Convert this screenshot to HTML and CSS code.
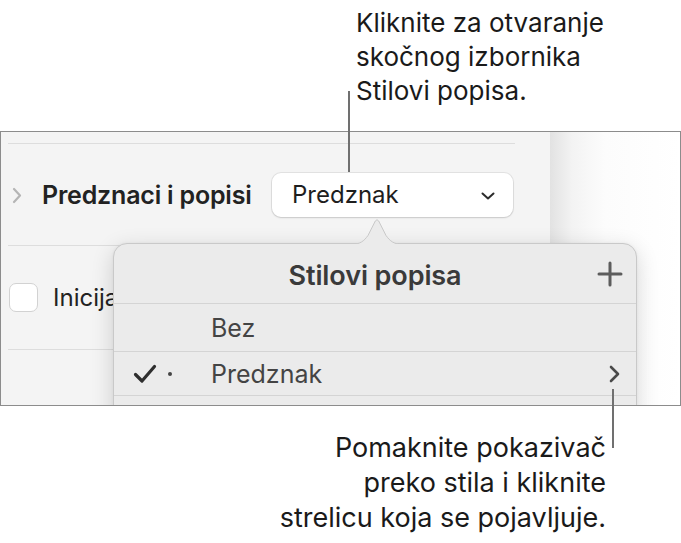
FILE: index.html
```html
<!DOCTYPE html>
<html lang="hr">
<head>
<meta charset="utf-8">
<title>Stilovi popisa</title>
<link rel="stylesheet" href="styles.css">
</head>
<body>
<div class="page">
  <p class="callout callout-top">Kliknite za otvaranje<br>skočnog izbornika<br>Stilovi popisa.</p>

  <div class="frame">
    <div class="sidebar">
      <div class="section">
        <div class="row row-lists">
          <svg class="disclosure" width="10" height="17" viewBox="0 0 10 17"><path d="M2 2 L8 8.5 L2 15" fill="none" stroke="#b5b5b5" stroke-width="2.2" stroke-linecap="round" stroke-linejoin="round"/></svg>
          <span class="row-label">Predznaci i popisi</span>
          <div class="popup-btn">
            <span>Predznak</span>
            <svg width="14" height="8" viewBox="0 0 14 8"><path d="M1.5 1.5 L7 6.5 L12.5 1.5" fill="none" stroke="#2b2b2b" stroke-width="2" stroke-linecap="round" stroke-linejoin="round"/></svg>
          </div>
        </div>
      </div>
      <div class="section">
        <div class="row row-check">
          <span class="checkbox"></span>
          <span class="check-label">Inicijal</span>
        </div>
      </div>
      <div class="section"></div>
    </div>
    <div class="doc"></div>

    <div class="popover">
      <svg class="tail" width="52" height="27" viewBox="0 0 52 27"><path d="M0 26.5 C9 26.5 13 23 17 17.5 L24.3 3 Q26 0.4 27.7 3 L35 17.5 C39 23 43 26.5 52 26.5" fill="#ebebeb" stroke="#c9c9c9" stroke-width="1"/><rect x="0" y="26" width="52" height="1" fill="#ebebeb"/></svg>
      <div class="pop-header">
        <span class="pop-title">Stilovi popisa</span>
        <svg class="plus" width="26" height="26" viewBox="0 0 26 26"><path d="M13 2 V24 M2 13 H24" stroke="#5c5c5c" stroke-width="3" stroke-linecap="round"/></svg>
      </div>
      <div class="pop-row">
        <span class="mark"></span>
        <span class="pop-text">Bez</span>
      </div>
      <div class="pop-row pop-row-sel">
        <span class="mark">
          <svg width="24" height="20" viewBox="0 0 24 20"><path d="M2.5 10.5 L9 17 L21.5 2.5" fill="none" stroke="#2e2e2e" stroke-width="3.2" stroke-linecap="round" stroke-linejoin="round"/></svg>
          <span class="bullet"></span>
        </span>
        <span class="pop-text">Predznak</span>
        <svg class="go" width="11" height="18" viewBox="0 0 11 18"><path d="M2 2 L9 9 L2 16" fill="none" stroke="#4a4a4a" stroke-width="2.6" stroke-linecap="round" stroke-linejoin="round"/></svg>
      </div>
      <div class="pop-row"></div>
    </div>
  </div>

  <p class="callout callout-bottom">Pomaknite pokazivač<br>preko stila i kliknite<br>strelicu koja se pojavljuje.</p>

  <span class="leader leader-top"></span>
  <span class="leader leader-bottom"></span>
</div>
</body>
</html>
```

FILE: styles.css
```css
* { box-sizing: border-box; }

html, body {
  margin: 0;
  padding: 0;
  background: #ffffff;
}

body {
  font-family: "Inter", "Liberation Sans", sans-serif;
  color: #1d1d1d;
}

.page {
  position: relative;
  width: 681px;
  height: 543px;
  overflow: hidden;
}

.callout {
  margin: 0;
  color: #1a1a1a;
  white-space: nowrap;
}

.callout-top {
  font-size: 26px;
  line-height: 34px;
  padding: 6px 0 0 356px;
  height: 131px;
}

.callout-bottom {
  font-size: 27px;
  line-height: 35px;
  margin-top: 24px;
  padding-right: 75px;
  text-align: right;
}

/* frame */
.frame {
  position: relative;
  display: flex;
  width: 681px;
  height: 275px;
  border: 1px solid #8c8c8c;
  overflow: hidden;
}

.sidebar {
  width: 549px;
  flex: none;
  background: #f4f4f4;
  padding: 11px 35px 0 7px;
}

.doc {
  flex: 1;
  background: linear-gradient(to right, #e2e2e2 0px, #f3f3f3 22px, #fcfcfc 55px, #ffffff 100%);
}

.section {
  border-top: 1px solid #dddddd;
}

.row {
  display: flex;
  align-items: center;
}

.row-lists {
  height: 101px;
  padding: 0 2px 0 4px;
}

.disclosure {
  flex: none;
  margin-right: 20px;
  margin-top: 1px;
}

.row-label {
  font-weight: 600;
  font-size: 25px;
  letter-spacing: -0.2px;
  color: #222222;
  white-space: nowrap;
}

.popup-btn {
  margin-left: auto;
  flex: none;
  width: 241px;
  height: 44px;
  background: #ffffff;
  border-radius: 9px;
  box-shadow: 0 0 0 1px rgba(0,0,0,0.07), 0 1px 2px rgba(0,0,0,0.12);
  display: flex;
  align-items: center;
  justify-content: space-between;
  padding: 0 18px 0 20px;
  font-size: 24px;
  color: #1e1e1e;
}

.popup-btn svg {
  margin-top: 2px;
}

.row-check {
  height: 103px;
  padding-left: 1px;
}

.checkbox {
  flex: none;
  width: 29px;
  height: 29px;
  border-radius: 7px;
  background: #ffffff;
  border: 1px solid #d2d2d2;
  margin-right: 15px;
}

.check-label {
  font-size: 24px;
  color: #222222;
}

/* popover */
.popover {
  position: absolute;
  left: 112px;
  top: 111px;
  width: 524px;
  height: 220px;
  background: #ebebeb;
  border: 1px solid #c9c9c9;
  border-radius: 14px;
  box-shadow: 0 6px 22px rgba(0,0,0,0.16), 0 0 3px rgba(0,0,0,0.05);
}

.tail {
  position: absolute;
  left: 237px;
  top: -26px;
  display: block;
}

.pop-header {
  height: 59px;
  display: grid;
  grid-template-columns: 1fr auto 1fr;
  align-items: center;
  padding: 0 13px;
}

.pop-title {
  grid-column: 2;
  font-weight: 600;
  font-size: 27px;
  letter-spacing: -0.1px;
  color: #3a3a3a;
  margin-top: 4px;
}

.plus {
  grid-column: 3;
  justify-self: end;
}

.pop-row {
  height: 48px;
  border-top: 1px solid #d4d4d4;
  display: flex;
  align-items: center;
  padding: 0 16px 0 19px;
  font-size: 25px;
  color: #444444;
}

.pop-row-sel {
  height: 44px;
}

.mark {
  width: 78px;
  flex: none;
  display: flex;
  align-items: center;
}

.bullet {
  width: 4px;
  height: 4px;
  border-radius: 50%;
  background: #444444;
  margin-left: 11px;
}

.pop-text {
  flex: 1;
}

.go {
  flex: none;
}

/* leader lines */
.leader {
  position: absolute;
  width: 2px;
  background: #707070;
}

.leader-top {
  left: 348px;
  top: 91px;
  height: 81px;
}

.leader-bottom {
  left: 612px;
  top: 389px;
  height: 59px;
}
```
